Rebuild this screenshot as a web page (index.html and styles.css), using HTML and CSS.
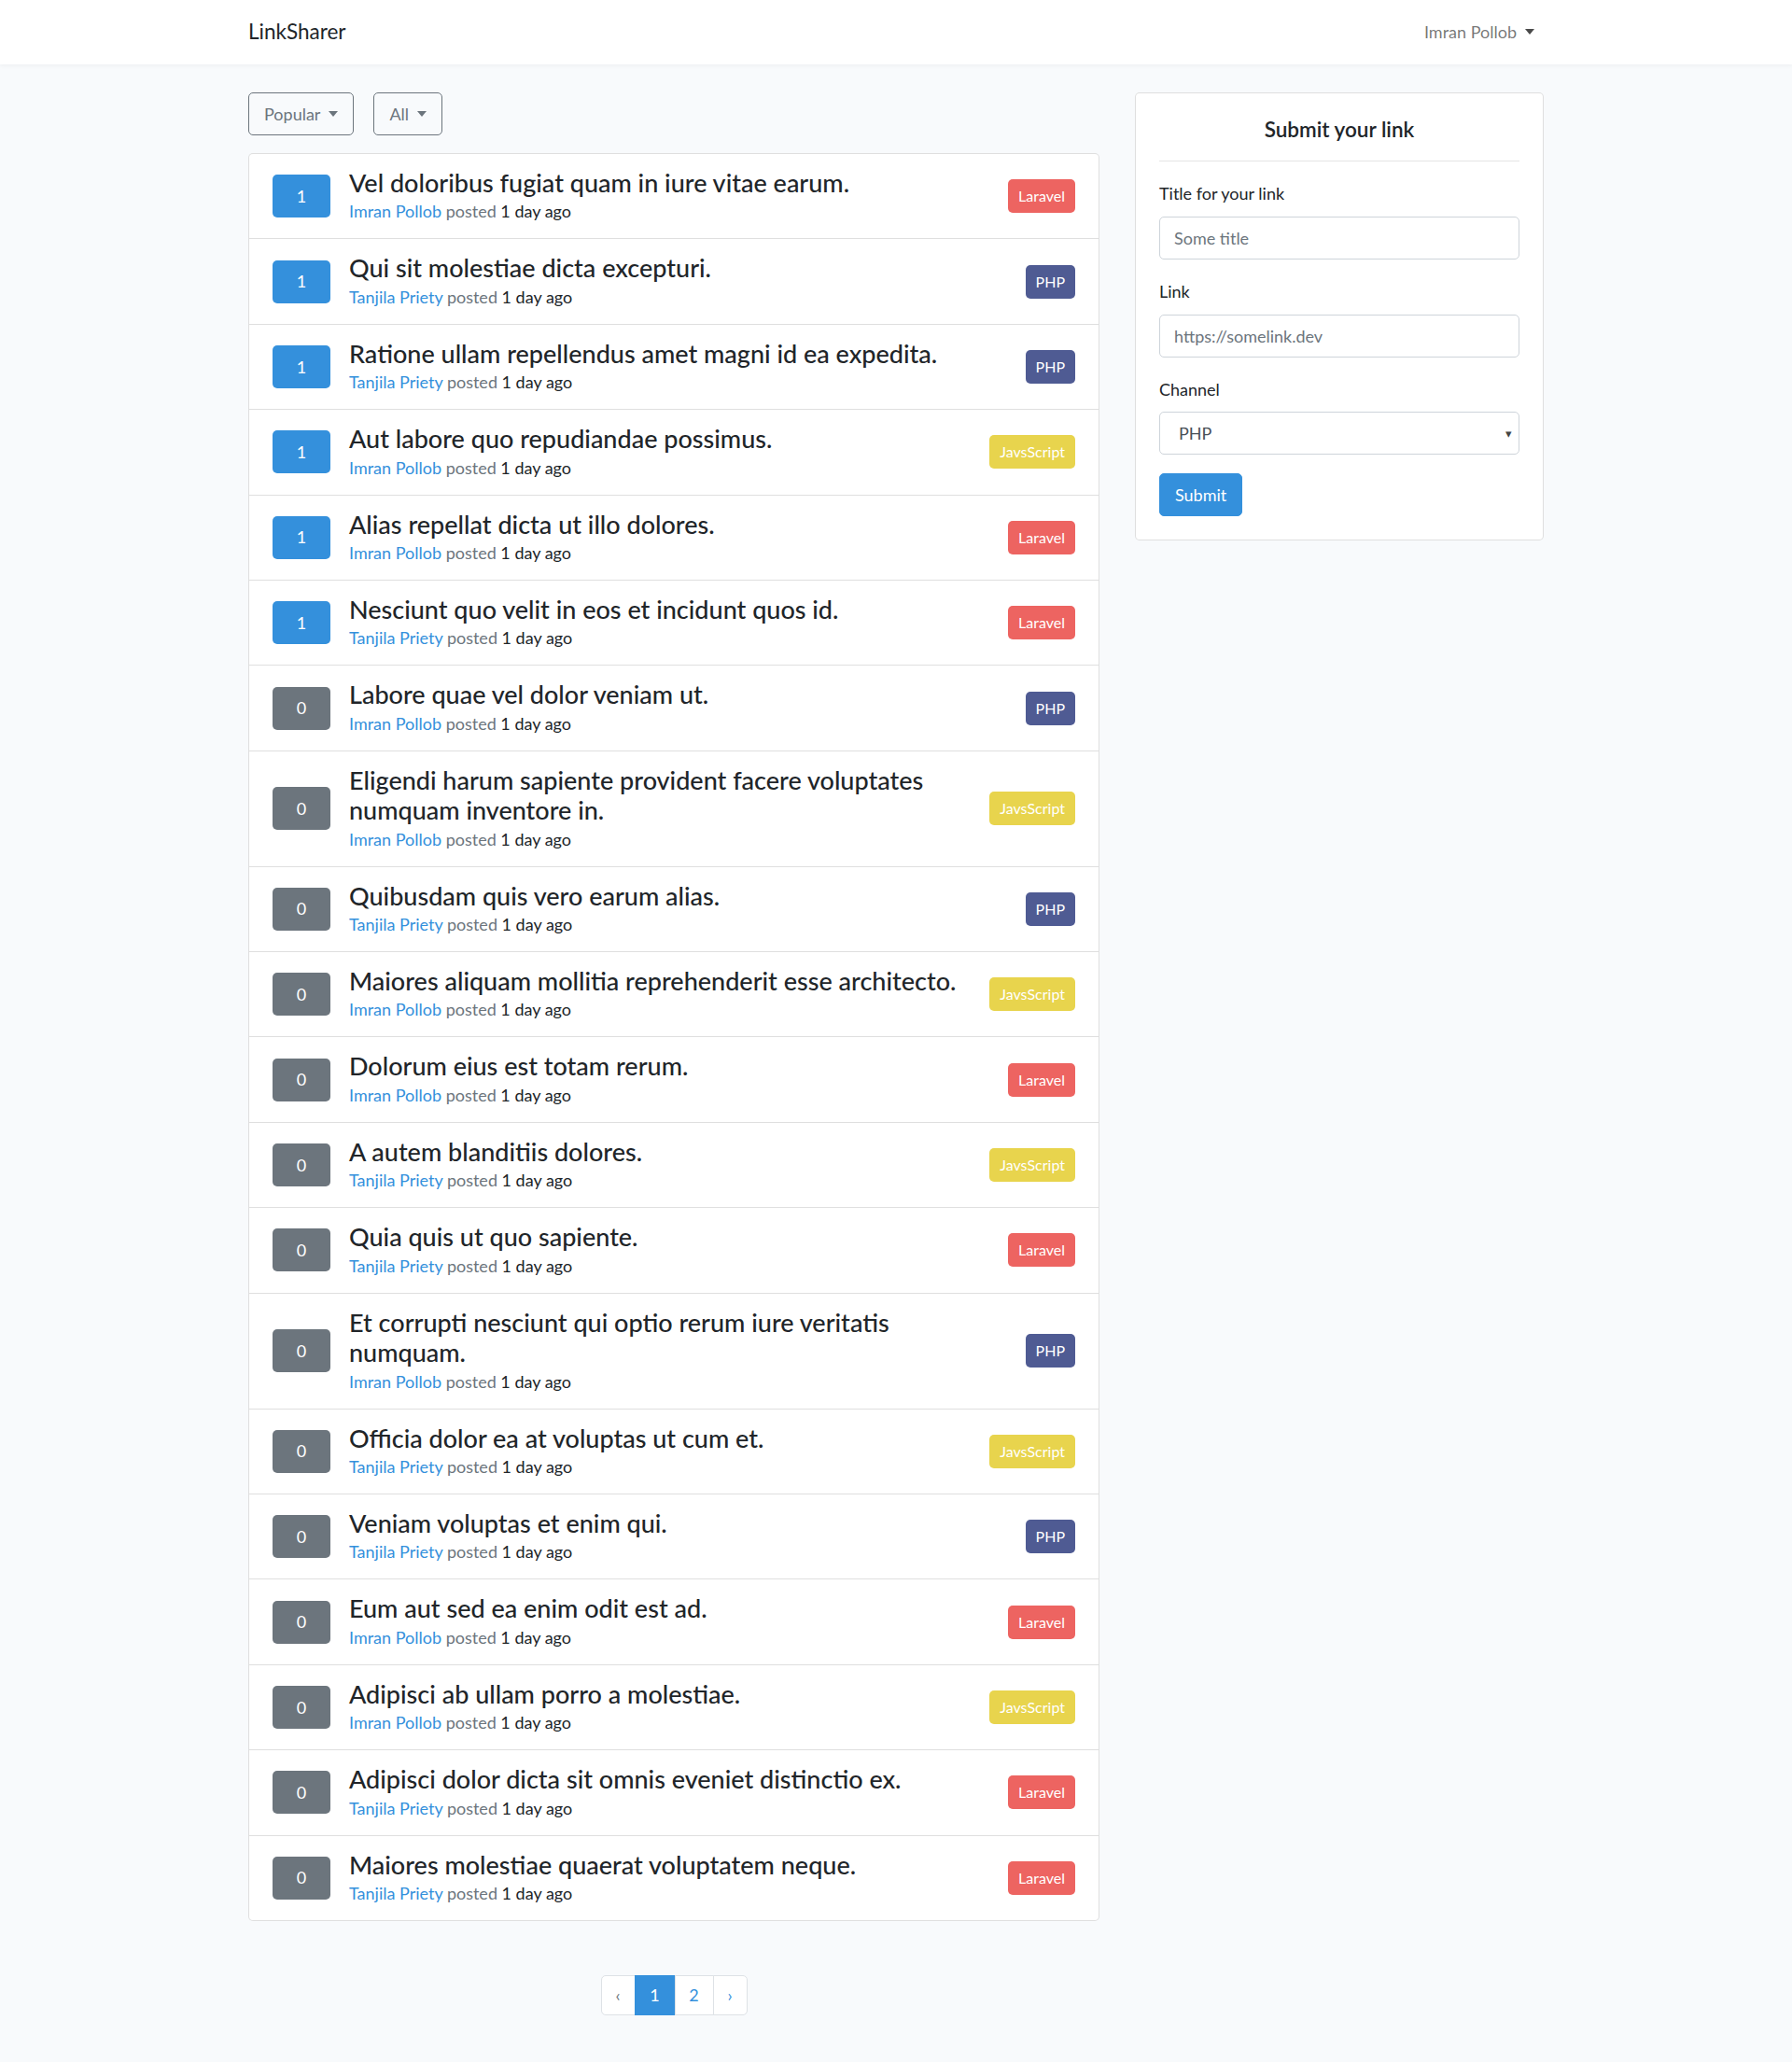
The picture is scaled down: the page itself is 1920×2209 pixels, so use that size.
FILE: index.html
```html
<!DOCTYPE html>
<html lang="en">
<head>
<meta charset="utf-8">
<title>LinkSharer</title>
<link rel="stylesheet" href="styles.css">
</head>
<body>
<nav class="navbar">
  <div class="container nav-inner">
    <a class="brand" href="#">LinkSharer</a>
    <a class="nav-user" href="#">Imran Pollob<span class="caret"></span></a>
  </div>
</nav>
<main class="main">
  <div class="container layout">
    <div class="col-main">
      <div class="filters">
        <button class="btn btn-outline">Popular<span class="caret"></span></button>
        <button class="btn btn-outline">All<span class="caret"></span></button>
      </div>
      <ul class="list">
        <li class="item"><span class="vote vote-up">1</span><div class="item-body"><h4 class="item-title">Vel doloribus fugiat quam in iure vitae earum.</h4><div class="meta"><a class="author" href="#">Imran Pollob</a> <span class="muted">posted</span> 1 day ago</div></div><span class="badge badge-laravel">Laravel</span></li>
        <li class="item"><span class="vote vote-up">1</span><div class="item-body"><h4 class="item-title">Qui sit molestiae dicta excepturi.</h4><div class="meta"><a class="author" href="#">Tanjila Priety</a> <span class="muted">posted</span> 1 day ago</div></div><span class="badge badge-php">PHP</span></li>
        <li class="item"><span class="vote vote-up">1</span><div class="item-body"><h4 class="item-title">Ratione ullam repellendus amet magni id ea expedita.</h4><div class="meta"><a class="author" href="#">Tanjila Priety</a> <span class="muted">posted</span> 1 day ago</div></div><span class="badge badge-php">PHP</span></li>
        <li class="item"><span class="vote vote-up">1</span><div class="item-body"><h4 class="item-title">Aut labore quo repudiandae possimus.</h4><div class="meta"><a class="author" href="#">Imran Pollob</a> <span class="muted">posted</span> 1 day ago</div></div><span class="badge badge-js">JavsScript</span></li>
        <li class="item"><span class="vote vote-up">1</span><div class="item-body"><h4 class="item-title">Alias repellat dicta ut illo dolores.</h4><div class="meta"><a class="author" href="#">Imran Pollob</a> <span class="muted">posted</span> 1 day ago</div></div><span class="badge badge-laravel">Laravel</span></li>
        <li class="item"><span class="vote vote-up">1</span><div class="item-body"><h4 class="item-title">Nesciunt quo velit in eos et incidunt quos id.</h4><div class="meta"><a class="author" href="#">Tanjila Priety</a> <span class="muted">posted</span> 1 day ago</div></div><span class="badge badge-laravel">Laravel</span></li>
        <li class="item"><span class="vote">0</span><div class="item-body"><h4 class="item-title">Labore quae vel dolor veniam ut.</h4><div class="meta"><a class="author" href="#">Imran Pollob</a> <span class="muted">posted</span> 1 day ago</div></div><span class="badge badge-php">PHP</span></li>
        <li class="item"><span class="vote">0</span><div class="item-body"><h4 class="item-title">Eligendi harum sapiente provident facere voluptates numquam inventore in.</h4><div class="meta"><a class="author" href="#">Imran Pollob</a> <span class="muted">posted</span> 1 day ago</div></div><span class="badge badge-js">JavsScript</span></li>
        <li class="item"><span class="vote">0</span><div class="item-body"><h4 class="item-title">Quibusdam quis vero earum alias.</h4><div class="meta"><a class="author" href="#">Tanjila Priety</a> <span class="muted">posted</span> 1 day ago</div></div><span class="badge badge-php">PHP</span></li>
        <li class="item"><span class="vote">0</span><div class="item-body"><h4 class="item-title">Maiores aliquam mollitia reprehenderit esse architecto.</h4><div class="meta"><a class="author" href="#">Imran Pollob</a> <span class="muted">posted</span> 1 day ago</div></div><span class="badge badge-js">JavsScript</span></li>
        <li class="item"><span class="vote">0</span><div class="item-body"><h4 class="item-title">Dolorum eius est totam rerum.</h4><div class="meta"><a class="author" href="#">Imran Pollob</a> <span class="muted">posted</span> 1 day ago</div></div><span class="badge badge-laravel">Laravel</span></li>
        <li class="item"><span class="vote">0</span><div class="item-body"><h4 class="item-title">A autem blanditiis dolores.</h4><div class="meta"><a class="author" href="#">Tanjila Priety</a> <span class="muted">posted</span> 1 day ago</div></div><span class="badge badge-js">JavsScript</span></li>
        <li class="item"><span class="vote">0</span><div class="item-body"><h4 class="item-title">Quia quis ut quo sapiente.</h4><div class="meta"><a class="author" href="#">Tanjila Priety</a> <span class="muted">posted</span> 1 day ago</div></div><span class="badge badge-laravel">Laravel</span></li>
        <li class="item"><span class="vote">0</span><div class="item-body"><h4 class="item-title">Et corrupti nesciunt qui optio rerum iure veritatis numquam.</h4><div class="meta"><a class="author" href="#">Imran Pollob</a> <span class="muted">posted</span> 1 day ago</div></div><span class="badge badge-php">PHP</span></li>
        <li class="item"><span class="vote">0</span><div class="item-body"><h4 class="item-title">Officia dolor ea at voluptas ut cum et.</h4><div class="meta"><a class="author" href="#">Tanjila Priety</a> <span class="muted">posted</span> 1 day ago</div></div><span class="badge badge-js">JavsScript</span></li>
        <li class="item"><span class="vote">0</span><div class="item-body"><h4 class="item-title">Veniam voluptas et enim qui.</h4><div class="meta"><a class="author" href="#">Tanjila Priety</a> <span class="muted">posted</span> 1 day ago</div></div><span class="badge badge-php">PHP</span></li>
        <li class="item"><span class="vote">0</span><div class="item-body"><h4 class="item-title">Eum aut sed ea enim odit est ad.</h4><div class="meta"><a class="author" href="#">Imran Pollob</a> <span class="muted">posted</span> 1 day ago</div></div><span class="badge badge-laravel">Laravel</span></li>
        <li class="item"><span class="vote">0</span><div class="item-body"><h4 class="item-title">Adipisci ab ullam porro a molestiae.</h4><div class="meta"><a class="author" href="#">Imran Pollob</a> <span class="muted">posted</span> 1 day ago</div></div><span class="badge badge-js">JavsScript</span></li>
        <li class="item"><span class="vote">0</span><div class="item-body"><h4 class="item-title">Adipisci dolor dicta sit omnis eveniet distinctio ex.</h4><div class="meta"><a class="author" href="#">Tanjila Priety</a> <span class="muted">posted</span> 1 day ago</div></div><span class="badge badge-laravel">Laravel</span></li>
        <li class="item"><span class="vote">0</span><div class="item-body"><h4 class="item-title">Maiores molestiae quaerat voluptatem neque.</h4><div class="meta"><a class="author" href="#">Tanjila Priety</a> <span class="muted">posted</span> 1 day ago</div></div><span class="badge badge-laravel">Laravel</span></li>
      </ul>
      <nav class="pager">
        <span class="page page-prev">&lsaquo;</span>
        <span class="page page-active">1</span>
        <a class="page page-2" href="#">2</a>
        <a class="page page-next" href="#">&rsaquo;</a>
      </nav>
    </div>
    <aside class="col-side">
      <div class="card">
        <h5 class="card-title">Submit your link</h5>
        <hr class="divider">
        <div class="form-group">
          <label class="label" for="title">Title for your link</label>
          <input class="input" id="title" type="text" placeholder="Some title">
        </div>
        <div class="form-group">
          <label class="label" for="link">Link</label>
          <input class="input" id="link" type="text" placeholder="https://somelink.dev">
        </div>
        <div class="form-group">
          <label class="label" for="channel">Channel</label>
          <div class="select-wrap">
            <select class="select" id="channel"><option>PHP</option><option>Laravel</option><option>JavsScript</option></select>
            <span class="select-caret">&#9662;</span>
          </div>
        </div>
        <button class="btn btn-primary">Submit</button>
      </div>
    </aside>
  </div>
</main>
</body>
</html>
```
FILE: styles.css
```css
* { box-sizing: border-box; }

html, body {
  margin: 0;
  padding: 0;
}

body {
  background: #f8fafc;
  color: #212529;
  font-family: "Lato", "Noto Sans", sans-serif;
  font-size: 18px;
  line-height: 1.6;
}

a { text-decoration: none; }

.container {
  width: 1388px;
  margin: 0 auto;
}

/* navbar */
.navbar {
  background: #fff;
  box-shadow: 0 2px 4px rgba(0, 0, 0, 0.04);
  height: 69px;
}

.nav-inner {
  height: 69px;
  display: flex;
  align-items: center;
  justify-content: space-between;
}

.brand {
  font-size: 22.5px;
  color: #212529;
  line-height: 1;
}

.nav-user {
  color: rgba(0, 0, 0, 0.55);
  padding-right: 10px;
  font-size: 18px;
}

.caret {
  display: inline-block;
  width: 0;
  height: 0;
  margin-left: 9px;
  vertical-align: 4px;
  border-top: 6px solid currentColor;
  border-left: 5.5px solid transparent;
  border-right: 5.5px solid transparent;
}

.nav-user .caret { color: #4a4a4a; }

/* layout */
.main {
  padding: 30px 0;
}

.layout {
  display: grid;
  grid-template-columns: 912px 438px;
  column-gap: 38px;
  align-items: start;
}

.filters {
  display: flex;
  gap: 21px;
  margin-bottom: 19px;
}

.btn {
  font-family: inherit;
  font-size: 18px;
  height: 46px;
  padding: 0 16px;
  border-radius: 5px;
  border: 1px solid transparent;
  cursor: pointer;
  line-height: 1;
}

.btn-outline {
  background: transparent;
  border-color: #6c757d;
  color: #6c757d;
}

.btn-primary {
  background: #3490dc;
  border-color: #3490dc;
  color: #fff;
  width: 89px;
}

/* list */
.list {
  list-style: none;
  margin: 0;
  padding: 0;
  background: #fff;
  border: 1px solid rgba(0, 0, 0, 0.125);
  border-radius: 5px;
}

.item {
  display: flex;
  align-items: center;
  padding: 15px 25px;
  border-top: 1px solid rgba(0, 0, 0, 0.125);
}

.item:first-child { border-top: 0; }

.vote {
  flex: none;
  width: 62px;
  height: 46px;
  border-radius: 5px;
  background: #6c757d;
  color: #fff;
  display: flex;
  align-items: center;
  justify-content: center;
  margin-right: 20px;
  font-size: 18px;
}

.vote-up { background: #3490dc; }

.item-body {
  flex: 1;
  min-width: 0;
  padding-right: 20px;
}

.item-title {
  margin: 0;
  font-size: 27px;
  font-weight: 500;
  line-height: 32.4px;
  color: #212529;
}

.meta {
  font-size: 18px;
  line-height: 28px;
  color: #212529;
}

.author { color: #3490dc; }

.muted { color: #6c757d; }

.badge {
  flex: none;
  height: 36px;
  line-height: 36px;
  padding: 0 11px;
  border-radius: 5px;
  color: #fff;
  font-size: 16px;
}

.badge-laravel { background: #ed6461; }
.badge-php { background: #4f5b93; }
.badge-js { background: #e8d44d; }

/* pagination */
.pager {
  display: flex;
  justify-content: center;
  margin-top: 58px;
}

.page {
  display: flex;
  align-items: center;
  justify-content: center;
  height: 43px;
  background: #fff;
  border: 1px solid #dee2e6;
  margin-left: -1px;
  color: #3490dc;
  font-size: 18px;
}

.page-prev {
  width: 37px;
  border-radius: 5px 0 0 5px;
  margin-left: 0;
  color: #6c757d;
}

.page-active {
  width: 44px;
  background: #3490dc;
  border-color: #3490dc;
  color: #fff;
}

.page-2 { width: 42px; }

.page-next {
  width: 37px;
  border-radius: 0 5px 5px 0;
}

/* side card */
.card {
  background: #fff;
  border: 1px solid rgba(0, 0, 0, 0.125);
  border-radius: 5px;
  padding: 25px;
}

.card-title {
  margin: 0;
  text-align: center;
  font-size: 22.5px;
  font-weight: 600;
  line-height: 27px;
}

.divider {
  border: 0;
  border-top: 1px solid rgba(0, 0, 0, 0.1);
  margin: 20px 0 20px;
}

.form-group { margin-bottom: 20px; }

.label {
  display: block;
  margin-bottom: 10px;
  line-height: 28.8px;
}

.input,
.select {
  display: block;
  width: 100%;
  height: 46px;
  padding: 0 15px;
  font-family: inherit;
  font-size: 18px;
  color: #495057;
  background: #fff;
  border: 1px solid #ced4da;
  border-radius: 5px;
}

.input::placeholder { color: #6c757d; }

.select-wrap { position: relative; }

.select {
  appearance: none;
  -webkit-appearance: none;
  padding-left: 20px;
}

.select-caret {
  position: absolute;
  right: 8px;
  top: 50%;
  transform: translateY(-50%);
  font-size: 13px;
  color: #444;
  pointer-events: none;
}
```
